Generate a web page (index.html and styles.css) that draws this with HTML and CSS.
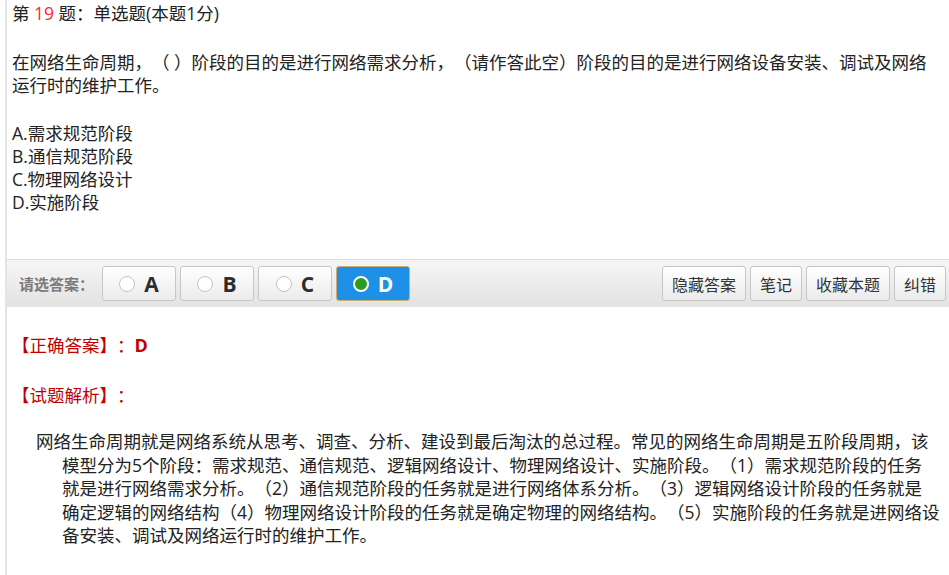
FILE: index.html
```html
<!DOCTYPE html>
<html lang="zh-CN">
<head>
  <meta charset="UTF-8" />
  <title>第19题</title>
  <link rel="stylesheet" href="styles.css">
</head>
<body>
  <div class="paper">
    <div class="title">第 <span class="num">19</span> 题：单选题(本题1分)</div>
    <div class="question">在网络生命周期，（ ）阶段的目的是进行网络需求分析，（请作答此空）阶段的目的是进行网络设备安装、调试及网络运行时的维护工作。</div>
    <div class="options">
      <div>A.需求规范阶段</div>
      <div>B.通信规范阶段</div>
      <div>C.物理网络设计</div>
      <div>D.实施阶段</div>
    </div>

    <div class="bar">
      <span class="bar-label">请选答案：</span>
      <button class="choice"><i class="radio"></i>A</button>
      <button class="choice"><i class="radio"></i>B</button>
      <button class="choice"><i class="radio"></i>C</button>
      <button class="choice active"><i class="radio"></i>D</button>
      <div class="tools">
        <button class="tool">隐藏答案</button>
        <button class="tool">笔记</button>
        <button class="tool">收藏本题</button>
        <button class="tool">纠错</button>
      </div>
    </div>

    <div class="answer">【正确答案】：<b>D</b></div>
    <div class="answer analysis-title">【试题解析】：</div>
    <div class="analysis">网络生命周期就是网络系统从思考、调查、分析、建设到最后淘汰的总过程。常见的网络生命周期是五阶段周期，该模型分为5个阶段：需求规范、通信规范、逻辑网络设计、物理网络设计、实施阶段。（1）需求规范阶段的任务<br>就是进行网络需求分析。（2）通信规范阶段的任务就是进行网络体系分析。（3）逻辑网络设计阶段的任务就是<br>确定逻辑的网络结构（4）物理网络设计阶段的任务就是确定物理的网络结构。（5）实施阶段的任务就是进网络设备安装、调试及网络运行时的维护工作。</div>
  </div>
</body>
</html>
```

FILE: styles.css
```css
* {
  box-sizing: border-box;
  margin: 0;
  padding: 0;
}

body {
  background: #ffffff;
  font-family: "Open Sans", "Noto Sans CJK SC", sans-serif;
  font-size: 17.5px;
  color: #222;
  text-spacing-trim: space-all;
  overflow: hidden;
}

.paper {
  margin-left: 5px;
  border-left: 2px solid #e4e4e4;
  min-height: 575px;
}

.title {
  padding: 2px 0 0 5px;
  line-height: 23px;
}

.title .num {
  color: #ff2a2a;
}

.question {
  padding: 26px 12px 0 5px;
  line-height: 23px;
}

.options {
  padding: 25px 0 0 5px;
  line-height: 23px;
}

.bar {
  margin-top: 45px;
  height: 48px;
  display: flex;
  align-items: center;
  border-top: 1px solid #dcdcdc;
  background: linear-gradient(#f6f6f6, #e2e2e2);
  padding-left: 12px;
}

.bar-label {
  font-size: 15px;
  font-weight: bold;
  color: #7a7a7a;
  width: 83px;
}

button {
  font-family: "Open Sans", "Noto Sans CJK SC", sans-serif;
  text-spacing-trim: space-all;
  height: 35px;
  border: 1px solid #c6c6c6;
  border-radius: 3px;
  background: linear-gradient(#ffffff, #ebebeb);
  color: #333;
  cursor: pointer;
}

.choice {
  width: 74px;
  margin-right: 4px;
  display: flex;
  align-items: center;
  justify-content: center;
  gap: 9px;
  font-size: 21px;
  font-weight: bold;
  color: #2d2d2d;
}

.radio {
  width: 16px;
  height: 16px;
  border-radius: 50%;
  border: 1px solid #c4c4c4;
  background: #fff;
}

.choice.active {
  background: #1e90e8;
  border-color: #c9ad72;
  color: #fff;
}

.choice.active .radio {
  border: 2px solid #fff;
  background: #2b9c1f;
}

.tools {
  margin-left: auto;
  display: flex;
  gap: 4px;
  padding-right: 3px;
}

.tool {
  font-size: 16px;
  padding: 0 9px;
  color: #333;
}

.answer {
  color: #c00000;
  padding-left: 5px;
  margin-top: 27px;
  line-height: 23px;
}

.answer b {
  font-size: 18px;
  font-weight: bold;
}

.analysis-title {
  margin-top: 27px;
}

.analysis {
  margin-top: 23px;
  padding: 0 8px 0 55px;
  text-indent: -26px;
  line-height: 23.5px;
  color: #222;
}
```
